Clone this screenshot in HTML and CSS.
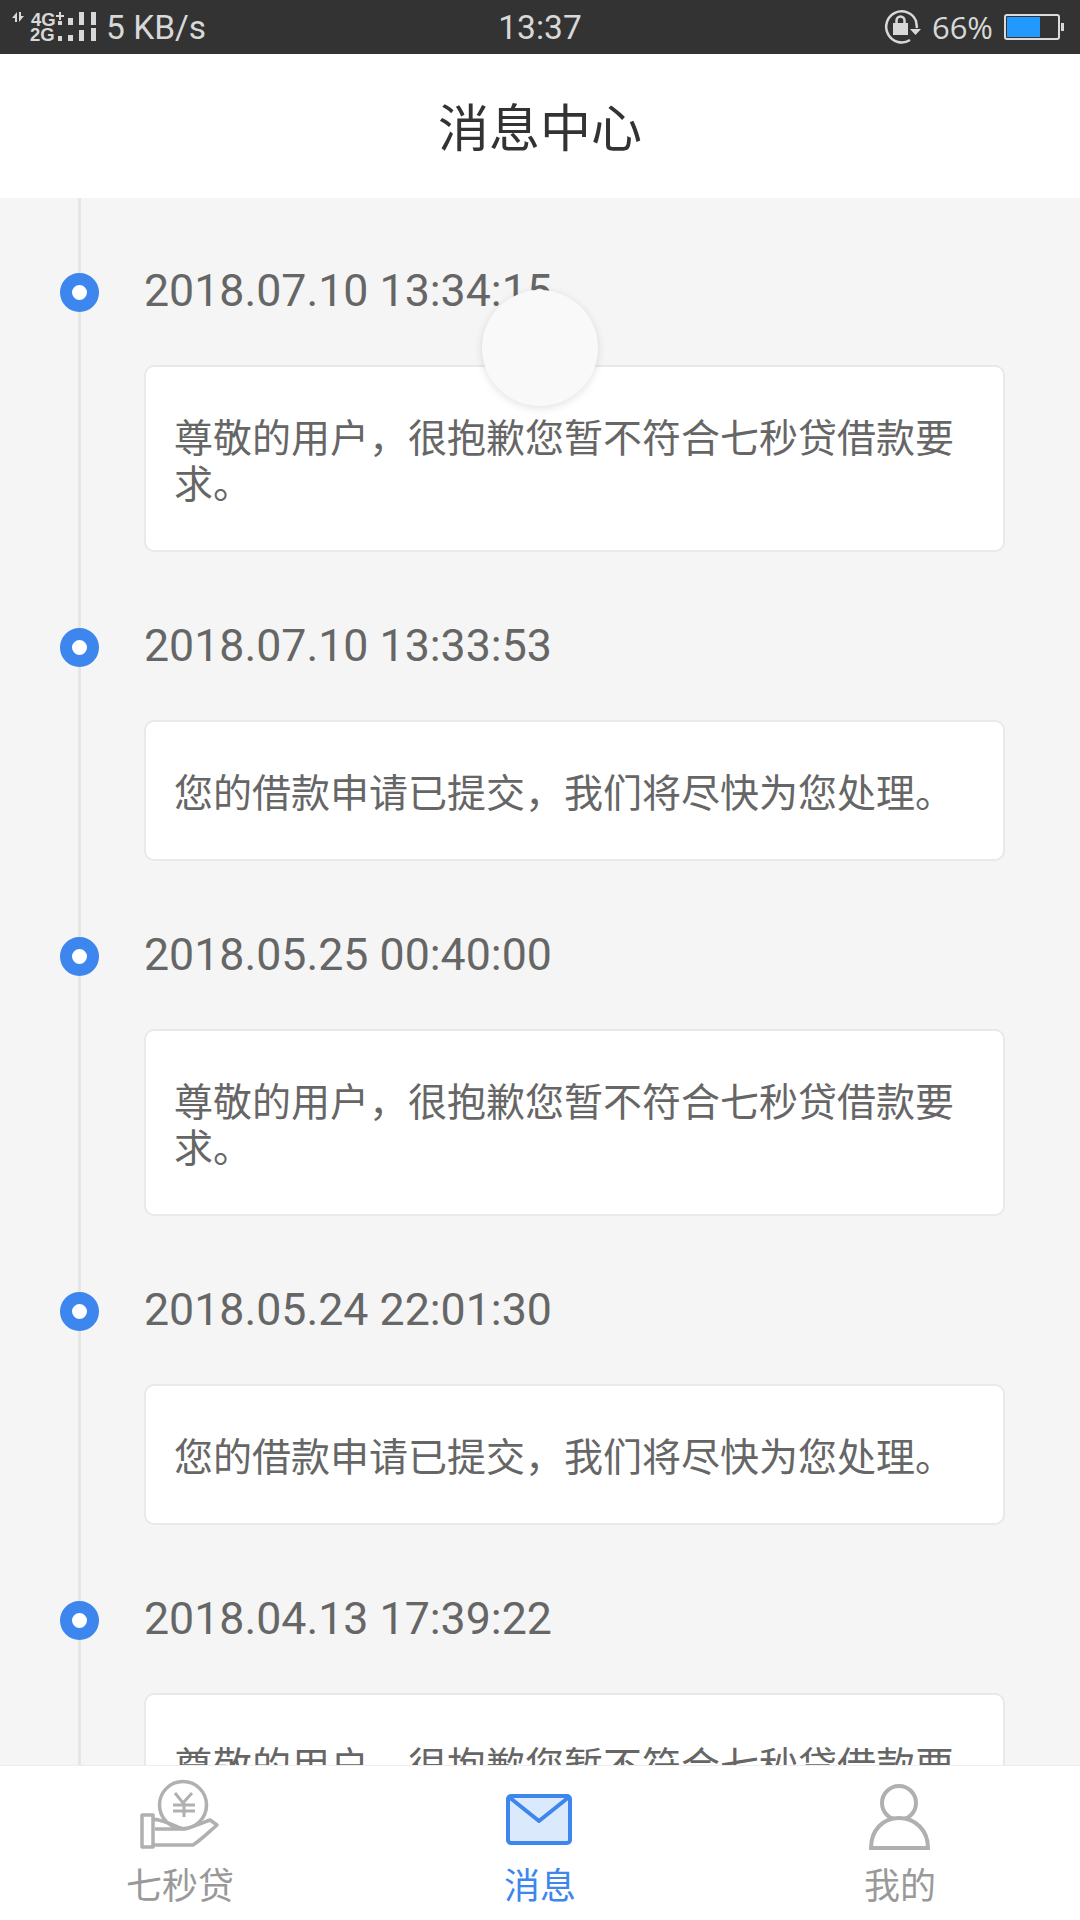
FILE: index.html
```html
<!DOCTYPE html>
<html lang="zh-CN">
<head>
<meta charset="utf-8">
<title>消息中心</title>
<link rel="stylesheet" href="styles.css">
</head>
<body>
<div class="page">
  <div class="status">
    <div class="status-left">
      <svg class="net" width="98" height="54" viewBox="0 0 98 54">
        <path class="net-fill" d="M12 18l5-6v10h-2v-4zM19 12h2v4h3l-5 6z"/>
        <text class="net-text" x="31" y="26">4G</text>
        <text class="net-text" x="30" y="41">2G</text>
        <path class="net-fill" d="M59 12h2v3h3v2h-3v3h-2v-3h-3v-2h3zM58 21h4v4h-4zM58 36h4v5h-4zM68 18h5v7h-5zM68 35h5v6h-5zM79 12h5v13h-5zM79 30h5v11h-5zM91 12h5v13h-5zM91 28h5v13h-5z"/>
      </svg>
      <span class="speed">5 KB/s</span>
    </div>
    <div class="clock">13:37</div>
    <div class="status-right">
      <svg class="rot" width="38" height="34" viewBox="0 0 38 34">
        <path class="rot-line" d="M27 30A15.500 15.500 0 1 1 33 11L34 18"/>
        <path class="net-fill" d="M27 19h11l-5.500 6zM10 13h15v12H10z"/>
        <path class="rot-lock" d="M13.500 13v-2.500a4 4 0 0 1 8 0V13"/>
      </svg>
      <span class="pct">66%</span>
      <div class="battery"><div class="battery-fill"></div></div>
      <div class="battery-tip"></div>
    </div>
  </div>

  <header class="title-bar">消息中心</header>

  <main class="content">
    <div class="timeline">
      <section class="item">
        <div class="date"><span class="dot"></span>2018.07.10 13:34:15</div>
        <div class="card">尊敬的用户，很抱歉您暂不符合七秒贷借款要求。</div>
      </section>
      <section class="item">
        <div class="date"><span class="dot"></span>2018.07.10 13:33:53</div>
        <div class="card">您的借款申请已提交，我们将尽快为您处理。</div>
      </section>
      <section class="item">
        <div class="date"><span class="dot"></span>2018.05.25 00:40:00</div>
        <div class="card">尊敬的用户，很抱歉您暂不符合七秒贷借款要求。</div>
      </section>
      <section class="item">
        <div class="date"><span class="dot"></span>2018.05.24 22:01:30</div>
        <div class="card">您的借款申请已提交，我们将尽快为您处理。</div>
      </section>
      <section class="item">
        <div class="date"><span class="dot"></span>2018.04.13 17:39:22</div>
        <div class="card">尊敬的用户，很抱歉您暂不符合七秒贷借款要求。</div>
      </section>
    </div>
    <div class="float-ball"></div>
  </main>

  <nav class="tabs">
    <div class="tab">
      <svg class="tab-icon" width="90" height="80" viewBox="0 0 90 80">
        <circle class="grey-line" cx="48" cy="30" r="23.500"/>
        <path class="grey-thin" d="M40 18l8 10 9-10M38 30h22M38 36h22M49 28v14"/>
        <path class="grey-line" d="M7 40h11v32H7zM18 44c9 1 18 5 25 8 5 2 7 2 7 2H20M50 54c8-2 17-6 25-9l7 5c-6 5-16 15-24 20H18"/>
      </svg>
      <span class="tab-label">七秒贷</span>
    </div>
    <div class="tab tab-on">
      <svg class="tab-icon" width="90" height="80" viewBox="0 0 90 80">
        <rect class="mail-body" x="13" y="21" width="62" height="47" rx="3"/>
        <path class="mail-flap" d="M14 22l30 24 30-24"/>
      </svg>
      <span class="tab-label">消息</span>
    </div>
    <div class="tab">
      <svg class="tab-icon" width="90" height="80" viewBox="0 0 90 80">
        <circle class="grey-bold" cx="44" cy="28" r="17"/>
        <path class="grey-bold" d="M16 73c0-18 12-30 28-30s29 12 29 30z"/>
      </svg>
      <span class="tab-label">我的</span>
    </div>
  </nav>
</div>
</body>
</html>
```
FILE: styles.css
```css
* { box-sizing: border-box; }
html, body { margin: 0; padding: 0; }
body { font-family: Roboto, "Noto Sans CJK SC", sans-serif; background: #f5f5f5; }
.page { width: 1080px; height: 1920px; display: flex; flex-direction: column; overflow: hidden; }

.status { height: 54px; flex: none; background: #333333; color: #d8d8d8; display: grid; grid-template-columns: 1fr auto 1fr; align-items: center; font-size: 33.500px; }
.status-left { display: flex; align-items: center; }
.net { flex: none; }
.net-fill { fill: #d8d8d8; }
.net-text { fill: #d8d8d8; font-family: "Liberation Sans", sans-serif; font-size: 18.500px; font-weight: 700; }
.speed { margin-left: 8px; }
.status-right { display: flex; align-items: center; justify-content: flex-end; padding-right: 16px; }
.rot { flex: none; margin-right: 11px; }
.rot-line { fill: none; stroke: #d8d8d8; stroke-width: 2.500; }
.rot-lock { fill: none; stroke: #d8d8d8; stroke-width: 2.500; }
.pct { margin-right: 11px; font-family: "Open Sans", sans-serif; font-size: 31px; }
.battery { width: 56px; height: 26px; border: 2px solid #dcdcdc; border-radius: 3px; padding: 1px; }
.battery-fill { width: 33px; height: 100%; background: #2299ff; }
.battery-tip { width: 3px; height: 8px; background: #d8d8d8; margin-left: 1px; }

.title-bar { height: 144px; flex: none; background: #fff; color: #333; font-family: "Noto Sans CJK SC", sans-serif; font-size: 51px; padding-bottom: 2px; display: flex; align-items: center; justify-content: center; }

.content { flex: 1; min-height: 0; position: relative; overflow: hidden; background: #f5f5f5; }
.timeline { margin-left: 78px; min-height: 100%; border-left: 3px solid #e6e6e6; padding: 64px 75px 0 63px; display: flex; flex-direction: column; gap: 65px; }
.date { position: relative; height: 60px; line-height: 58px; font-size: 44.700px; color: #666; }
.dot { position: absolute; left: -84px; top: 11px; width: 39px; height: 39px; border-radius: 50%; border: 12.500px solid #3d86ee; background: #fff; }
.card { margin-top: 43px; background: #fff; border: 2px solid #e9e9e9; border-radius: 10px; padding: 45px 29px 46px 28px; font-family: "Noto Sans CJK SC", sans-serif; font-size: 39px; line-height: 46px; color: #666; flex: none; }

.float-ball { position: absolute; left: 482px; top: 92px; width: 116px; height: 116px; border-radius: 50%; background: #f9f9f9; box-shadow: 0 2px 8px rgba(0, 0, 0, .12); }

.tabs { height: 155px; flex: none; background: #fff; border-top: 1px solid #eeeeee; display: grid; grid-template-columns: repeat(3, 1fr); }
.tab { display: flex; flex-direction: column; align-items: center; padding-top: 9px; color: #999; }
.tab-icon { display: block; flex: none; }
.tab-label { font-family: "Noto Sans CJK SC", sans-serif; font-size: 36px; line-height: 46px; margin-top: 5px; }
.tab-on { color: #3d86ee; }
.grey-line { fill: none; stroke: #b0b0b0; stroke-width: 3.500; stroke-linejoin: round; }
.grey-thin { fill: none; stroke: #b0b0b0; stroke-width: 3; }
.grey-bold { fill: #fff; stroke: #b0b0b0; stroke-width: 4; }
.mail-body { fill: #dbe9fd; stroke: #3d86ee; stroke-width: 4; }
.mail-flap { fill: none; stroke: #3d86ee; stroke-width: 4; stroke-linejoin: round; }
```
